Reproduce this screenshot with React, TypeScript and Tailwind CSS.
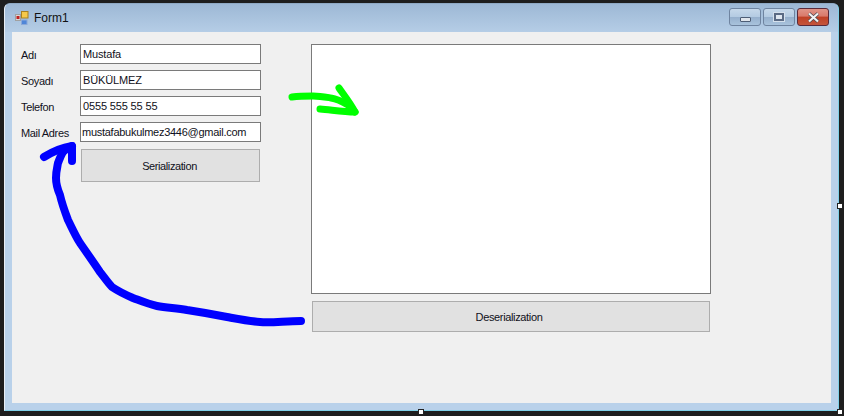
const FONT = "font-['Liberation_Sans',Arial,sans-serif]";

function Field({ label, value, tight }: { label: string; value: string; tight?: boolean }) {
  return (
    <div className="flex items-center h-5">
      <span className="w-[59px] shrink-0 text-[11px] leading-none tracking-[-0.35px] text-[#101020] mt-[2px]">{label}</span>
      <div className={`w-[181px] h-5 shrink-0 bg-white border border-[#7a7a7a] flex items-center text-[11px] leading-none text-[#101020] overflow-hidden whitespace-nowrap ${tight ? "pl-[1px] tracking-[-0.27px]" : "pl-[2px] tracking-[-0.15px]"}`}>
        {value}
      </div>
    </div>
  );
}

function CaptionButton({ children, close }: { children: React.ReactNode; close?: boolean }) {
  return (
    <div
      className={`w-[32px] h-[18px] rounded-[3px] border flex items-center justify-center ${
        close
          ? "border-[#5a2a3a] bg-[linear-gradient(#e09488_0%,#d9796a_45%,#bf4025_50%,#c4553c_100%)]"
          : "border-[#6f84a0] bg-[linear-gradient(#c6d8ea_0%,#b4cbe2_48%,#96b0cd_52%,#a9c3dc_100%)]"
      }`}
    >
      {children}
    </div>
  );
}

export default function App() {
  return (
    <div className={`${FONT} relative w-[844px] h-[416px] overflow-hidden bg-[#1e1e1e] pt-[3px] pl-[4px] pr-[5px] pb-[5px]`}>
      {/* window */}
      <div className="w-[835px] h-[408px] flex flex-col rounded-t-[6px] border border-[#7fd0e8] border-t-[#8fa9c4] border-l-[#e8eef5] bg-[#b9d1ea] overflow-hidden">
        {/* title bar */}
        <div className="h-[28px] shrink-0 flex items-center pl-[10px] pr-[9px] bg-[linear-gradient(#9db8d5,#b5cde6)]">
          <svg width="14" height="14" viewBox="0 0 14 14" className="shrink-0">
            <rect x="0.5" y="3.5" width="5" height="6" fill="#d8d8d8" stroke="#a0a0a0" />
            <rect x="1.5" y="5" width="3" height="3" fill="#c02020" />
            <rect x="6.5" y="0.5" width="6.5" height="6.5" fill="#f6c94a" stroke="#a88020" />
            <rect x="6.5" y="9" width="5.5" height="4.5" fill="#4f86d8" stroke="#8aa8d8" />
          </svg>
          <span className="ml-[5px] text-[12px] leading-none text-[#111]">Form1</span>
          <div className="ml-auto flex gap-[2px] mt-[-2px]">
            <CaptionButton>
              <div className="w-[11px] h-[5px] mt-[5px] bg-[#dfe5ec] border border-[#4d5d75] rounded-[1px]" />
            </CaptionButton>
            <CaptionButton>
              <div className="w-[10px] h-[8px] border-2 border-[#5a6a84] bg-[#dfe7f0] outline outline-1 outline-[#d5e0ec]" />
            </CaptionButton>
            <CaptionButton close>
              <svg width="13" height="11" viewBox="0 0 13 11">
                <path d="M2 1.5 L11 9.5 M11 1.5 L2 9.5" stroke="#4a4a52" strokeWidth="3.6" />
                <path d="M2 1.5 L11 9.5 M11 1.5 L2 9.5" stroke="#f2f2f2" strokeWidth="2.2" />
              </svg>
            </CaptionButton>
          </div>
        </div>
        {/* client */}
        <div className="ml-[7px] mr-[7px] h-[371px] shrink-0 bg-[#f0f0f0] flex pt-[12px] pl-[9px]">
          <div className="w-[240px] shrink-0 flex flex-col gap-[6px]">
            <Field label="Adı" value="Mustafa" />
            <Field label="Soyadı" value="BÜKÜLMEZ" />
            <Field label="Telefon" value="0555 555 55 55" />
            <Field label="Mail Adres" value="mustafabukulmez3446@gmail.com" tight />
            <div className="ml-[60px] mt-[1px] w-[179px] h-[33px] pt-[1px] pr-[2px] bg-[#e1e1e1] border border-[#adadad] flex items-center justify-center text-[11px] leading-none tracking-[-0.4px] text-[#101020]">
              Serialization
            </div>
          </div>
          <div className="ml-[50px] w-[400px] shrink-0 flex flex-col">
            <div className="h-[250px] bg-white border border-[#7a7a7a]" />
            <div className="ml-[1px] mt-[7px] w-[398px] h-[31px] pt-[1px] pr-[4px] bg-[#e1e1e1] border border-[#adadad] flex items-center justify-center text-[11px] leading-none tracking-[-0.35px] text-[#101020]">
              Deserialization
            </div>
          </div>
        </div>
      </div>

      {/* hand-drawn arrows */}
      <svg className="absolute inset-0 pointer-events-none" width="844" height="416" viewBox="0 0 844 416" fill="none" strokeLinecap="round" strokeLinejoin="round">
        <path
          d="M301 321 C285 321 272 323 260 322 C248 321 238 319 227 317 C212 314 200 312 187 310 C176 308 167 308 157 306 C148 304 141 301 133 298 C126 295 118 291 112 287 C108 283 104 277 100 272 C94 263 87 253 80 243 C75 235 72 228 68 220 C65 212 62 204 60 195 C57 188 56 184 56 178 C56 172 57 168 58 163 C60 158 61 155 63 152 C66 149 69 147 72 146"
          stroke="#0000ff"
          strokeWidth="8"
        />
        <path d="M44 157 C52 152 60 148 72 146 L72 161" stroke="#0000ff" strokeWidth="8" />
        <path
          d="M292 97 C300 96 306 96 313 96 C320 96 325 97 331 98 C338 99 343 102 348 105 L355 112 C343 112 332 110 320 109"
          stroke="#00ff00"
          strokeWidth="7"
        />
        <path d="M339 88 C343 94 349 101 355 112" stroke="#00ff00" strokeWidth="7" />
      </svg>

      {/* design handles */}
      <div className="absolute left-[837px] top-[203px] w-[6px] h-[6px] bg-white border border-[#222]" />
      <div className="absolute left-[418px] top-[409px] w-[6px] h-[6px] bg-white border border-[#222]" />
      <div className="absolute left-[837px] top-[409px] w-[6px] h-[6px] bg-white border border-[#222]" />
    </div>
  );
}
